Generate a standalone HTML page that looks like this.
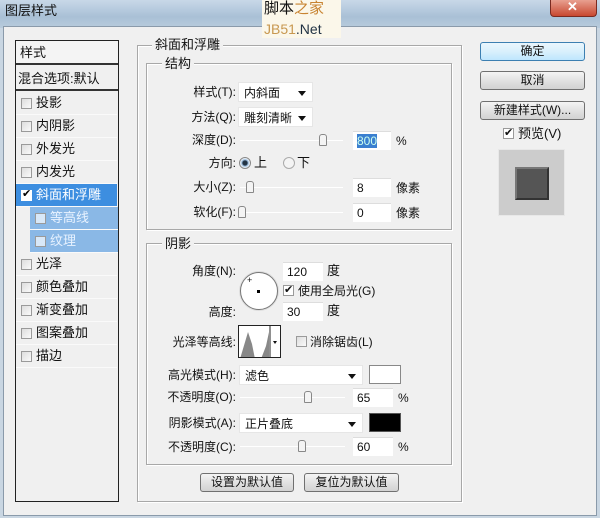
<!DOCTYPE html>
<html><head><meta charset="utf-8"><style>
*{margin:0;padding:0;box-sizing:border-box}
body{width:600px;height:518px;overflow:hidden;background:#c9d6e2;font-family:"Liberation Sans","Noto Sans CJK SC",sans-serif;font-size:12px;color:#111;position:relative}
.a{position:absolute}
.t{position:absolute;white-space:nowrap;line-height:14px}
.r{text-align:right}
.box{position:absolute;border:1px solid #a8a8a8;box-shadow:1px 1px 0 #fff inset,1px 1px 0 #fff}
.leg{position:absolute;background:#f0f0f0;padding:0 3px;line-height:14px;font-size:13px}
.inp{position:absolute;background:#fff;border-top:1px solid #ddd;height:19px;padding-left:4px;line-height:18px}
.dd{position:absolute;background:#fff;height:20px;line-height:20px;padding-left:5px;border:1px solid #e6e6e6}
.dd:after{content:"";position:absolute;right:6px;top:8px;border:4px solid transparent;border-top:5px solid #111;border-bottom:0}
.sl{position:absolute;height:1px;background:#aaa;border-bottom:1px solid #fff}
.th{position:absolute;width:8px;height:12px;border:1px solid #888;border-radius:3px 3px 1px 1px;background:#f4f4f4;top:-6px}
.btn{position:absolute;border:1px solid #707070;border-radius:3px;background:linear-gradient(#f4f4f4,#e2e2e2 50%,#d2d2d2);text-align:center;line-height:17px;font-size:12px}
.cb{position:absolute;width:11px;height:11px;border:1px solid #9a9a9a;background:linear-gradient(135deg,#ddd,#fafafa)}
.li{position:absolute;left:16px;width:101px;height:23px;border-bottom:1px solid #fafafa}
.li .cb{left:5px;top:6px}
.li span{position:absolute;left:20px;top:3px;font-size:13px;line-height:16px}
</style></head><body>
<div class="a" style="left:0;top:0;width:600px;height:28px;background:linear-gradient(#c8d8e8,#a9c0d6 60%,#b8cbdc)"></div>
<div class="t" style="left:5px;top:4px;font-size:13px">图层样式</div>
<div class="a" style="left:550px;top:0;width:47px;height:17px;border:1px solid #7a2a20;border-top:0;border-radius:0 0 4px 4px;background:linear-gradient(#e8a090,#c84830)"></div>
<div class="t" style="left:567px;top:0;color:#fff;font-weight:bold;font-size:13px">✕</div>
<div class="a" style="left:3px;top:26px;width:594px;height:490px;background:#f0f0f0;border:1px solid #8a9aaa"></div>
<div class="a" style="left:262px;top:0;width:79px;height:38px;background:#fbf7ea"></div>
<div class="t" style="left:264px;top:2px;font-size:15px;color:#111">脚本<span style="color:#c88432">之家</span></div>
<div class="t" style="left:264px;top:22px;font-size:14px;color:#c89850">JB51<span style="color:#234">.Net</span></div>

<!-- left list -->
<div class="a" style="left:15px;top:40px;width:104px;height:462px;border:1px solid #222;background:#f0f0f0"></div>
<div class="a" style="left:16px;top:41px;width:102px;height:24px;border-bottom:2px solid #333;background:#f4f4f4"></div>
<div class="t" style="left:20px;top:46px;font-size:13px">样式</div>
<div class="a" style="left:16px;top:67px;width:102px;height:24px;border-bottom:2px solid #333"></div>
<div class="t" style="left:18px;top:72px;font-size:13px">混合选项:默认</div>
<div class="li" style="top:92px"><div class="cb"></div><span>投影</span></div>
<div class="li" style="top:115px"><div class="cb"></div><span>内阴影</span></div>
<div class="li" style="top:138px"><div class="cb"></div><span>外发光</span></div>
<div class="li" style="top:161px"><div class="cb"></div><span>内发光</span></div>
<div class="li" style="top:184px;background:#3d8ee0;color:#fff"><div class="cb" style="background:#fff;border-color:#fff"></div><span style="color:#fff">斜面和浮雕</span><span style="left:6px;top:2px;color:#000;font-size:11px">✔</span></div>
<div class="li" style="top:207px;background:#8ab8e6;left:30px;width:88px"><div class="cb" style="left:5px;background:#d8e8f8"></div><span style="color:#e8f2ff">等高线</span></div>
<div class="li" style="top:230px;background:#8ab8e6;left:30px;width:88px"><div class="cb" style="left:5px;background:#d8e8f8"></div><span style="color:#e8f2ff">纹理</span></div>
<div class="li" style="top:253px"><div class="cb"></div><span>光泽</span></div>
<div class="li" style="top:276px"><div class="cb"></div><span>颜色叠加</span></div>
<div class="li" style="top:299px"><div class="cb"></div><span>渐变叠加</span></div>
<div class="li" style="top:322px"><div class="cb"></div><span>图案叠加</span></div>
<div class="li" style="top:345px"><div class="cb"></div><span>描边</span></div>

<!-- main group -->
<div class="box" style="left:137px;top:45px;width:325px;height:457px"></div>
<div class="leg" style="left:152px;top:38px">斜面和浮雕</div>
<div class="box" style="left:146px;top:63px;width:306px;height:167px"></div>
<div class="leg" style="left:162px;top:57px">结构</div>

<div class="t r" style="left:150px;width:86px;top:85px">样式(T):</div>
<div class="dd" style="left:238px;top:82px;width:75px">内斜面</div>
<div class="t r" style="left:150px;width:86px;top:110px">方法(Q):</div>
<div class="dd" style="left:238px;top:107px;width:75px">雕刻清晰</div>
<div class="t r" style="left:150px;width:86px;top:133px">深度(D):</div>
<div class="sl" style="left:240px;top:140px;width:103px"><div class="th" style="left:79px"></div></div>
<div class="inp" style="left:353px;top:131px;width:38px"><span style="background:#3a7fd0;color:#cfe">800</span></div>
<div class="t" style="left:396px;top:134px">%</div>
<div class="t r" style="left:150px;width:86px;top:156px">方向:</div>
<div class="a" style="left:239px;top:157px;width:12px;height:12px;border-radius:50%;border:1px solid #888;background:radial-gradient(#234 30%,#9bd 45%,#fff 70%)"></div>
<div class="t" style="left:254px;top:156px;font-size:13px">上</div>
<div class="a" style="left:283px;top:157px;width:12px;height:12px;border-radius:50%;border:1px solid #aaa;background:#f4f4f4"></div>
<div class="t" style="left:297px;top:156px;font-size:13px">下</div>
<div class="t r" style="left:150px;width:86px;top:180px">大小(Z):</div>
<div class="sl" style="left:240px;top:187px;width:103px"><div class="th" style="left:6px"></div></div>
<div class="inp" style="left:353px;top:178px;width:38px">8</div>
<div class="t" style="left:396px;top:181px">像素</div>
<div class="t r" style="left:150px;width:86px;top:205px">软化(F):</div>
<div class="sl" style="left:238px;top:212px;width:105px"><div class="th" style="left:0"></div></div>
<div class="inp" style="left:353px;top:203px;width:38px">0</div>
<div class="t" style="left:396px;top:206px">像素</div>

<div class="box" style="left:146px;top:243px;width:306px;height:222px"></div>
<div class="leg" style="left:162px;top:237px">阴影</div>
<div class="t r" style="left:150px;width:86px;top:264px">角度(N):</div>
<div class="a" style="left:240px;top:272px;width:38px;height:38px;border-radius:50%;border:1px solid #777;background:#fff;box-shadow:0 0 0 1px #ddd"></div>
<div class="a" style="left:257px;top:290px;width:3px;height:3px;background:#000"></div>
<div class="t" style="left:247px;top:273px;font-size:9px">+</div>
<div class="inp" style="left:283px;top:262px;width:40px">120</div>
<div class="t" style="left:327px;top:264px;font-size:13px">度</div>
<div class="cb" style="left:283px;top:285px;background:#fff"></div><div class="t" style="left:284px;top:283px;font-size:11px">✔</div>
<div class="t" style="left:298px;top:284px">使用全局光(G)</div>
<div class="t r" style="left:150px;width:86px;top:305px">高度:</div>
<div class="inp" style="left:283px;top:302px;width:40px">30</div>
<div class="t" style="left:327px;top:304px;font-size:13px">度</div>
<div class="t r" style="left:150px;width:86px;top:335px">光泽等高线:</div>
<div class="a" style="left:238px;top:325px;width:43px;height:33px;border:1px solid #222;background:#fff;overflow:hidden">
<svg width="43" height="33"><path d="M1 33 L9 6 L13 18 L16 33 Z M22 33 L27 20 L30 6 L30 33Z" fill="#888"/><line x1="31" y1="0" x2="31" y2="33" stroke="#222"/><path d="M34 15 h4 l-2 3z" fill="#111"/></svg></div>
<div class="cb" style="left:296px;top:336px"></div>
<div class="t" style="left:310px;top:335px">消除锯齿(L)</div>
<div class="t r" style="left:150px;width:86px;top:368px">高光模式(H):</div>
<div class="dd" style="left:239px;top:365px;width:124px">滤色</div>
<div class="a" style="left:369px;top:365px;width:32px;height:19px;background:#fff;border:1px solid #888"></div>
<div class="t r" style="left:150px;width:86px;top:390px">不透明度(O):</div>
<div class="sl" style="left:240px;top:397px;width:105px"><div class="th" style="left:64px"></div></div>
<div class="inp" style="left:353px;top:388px;width:40px">65</div>
<div class="t" style="left:398px;top:391px">%</div>
<div class="t r" style="left:150px;width:86px;top:416px">阴影模式(A):</div>
<div class="dd" style="left:239px;top:413px;width:124px">正片叠底</div>
<div class="a" style="left:369px;top:413px;width:32px;height:19px;background:#000;border:1px solid #555"></div>
<div class="t r" style="left:150px;width:86px;top:440px">不透明度(C):</div>
<div class="sl" style="left:240px;top:446px;width:105px"><div class="th" style="left:58px"></div></div>
<div class="inp" style="left:353px;top:437px;width:40px">60</div>
<div class="t" style="left:398px;top:440px">%</div>
<div class="btn" style="left:200px;top:473px;width:94px;height:19px">设置为默认值</div>
<div class="btn" style="left:304px;top:473px;width:95px;height:19px">复位为默认值</div>

<!-- right -->
<div class="btn" style="left:480px;top:42px;width:105px;height:19px;border-color:#3c7fb1;background:linear-gradient(#eaf6fd,#d9f0fc 50%,#bee6fd)">确定</div>
<div class="btn" style="left:480px;top:71px;width:105px;height:19px">取消</div>
<div class="btn" style="left:480px;top:101px;width:105px;height:19px">新建样式(W)...</div>
<div class="cb" style="left:503px;top:128px;background:#fff"></div><div class="t" style="left:504px;top:126px;font-size:11px">✔</div>
<div class="t" style="left:518px;top:127px;font-size:13px">预览(V)</div>
<div class="a" style="left:498px;top:149px;width:67px;height:67px;background:#ccc;border:1px solid #e8e8e8"></div>
<div class="a" style="left:515px;top:167px;width:34px;height:33px;background:#555;border:2px solid #333;border-top-color:#777;border-left-color:#777"></div>
</body></html>
